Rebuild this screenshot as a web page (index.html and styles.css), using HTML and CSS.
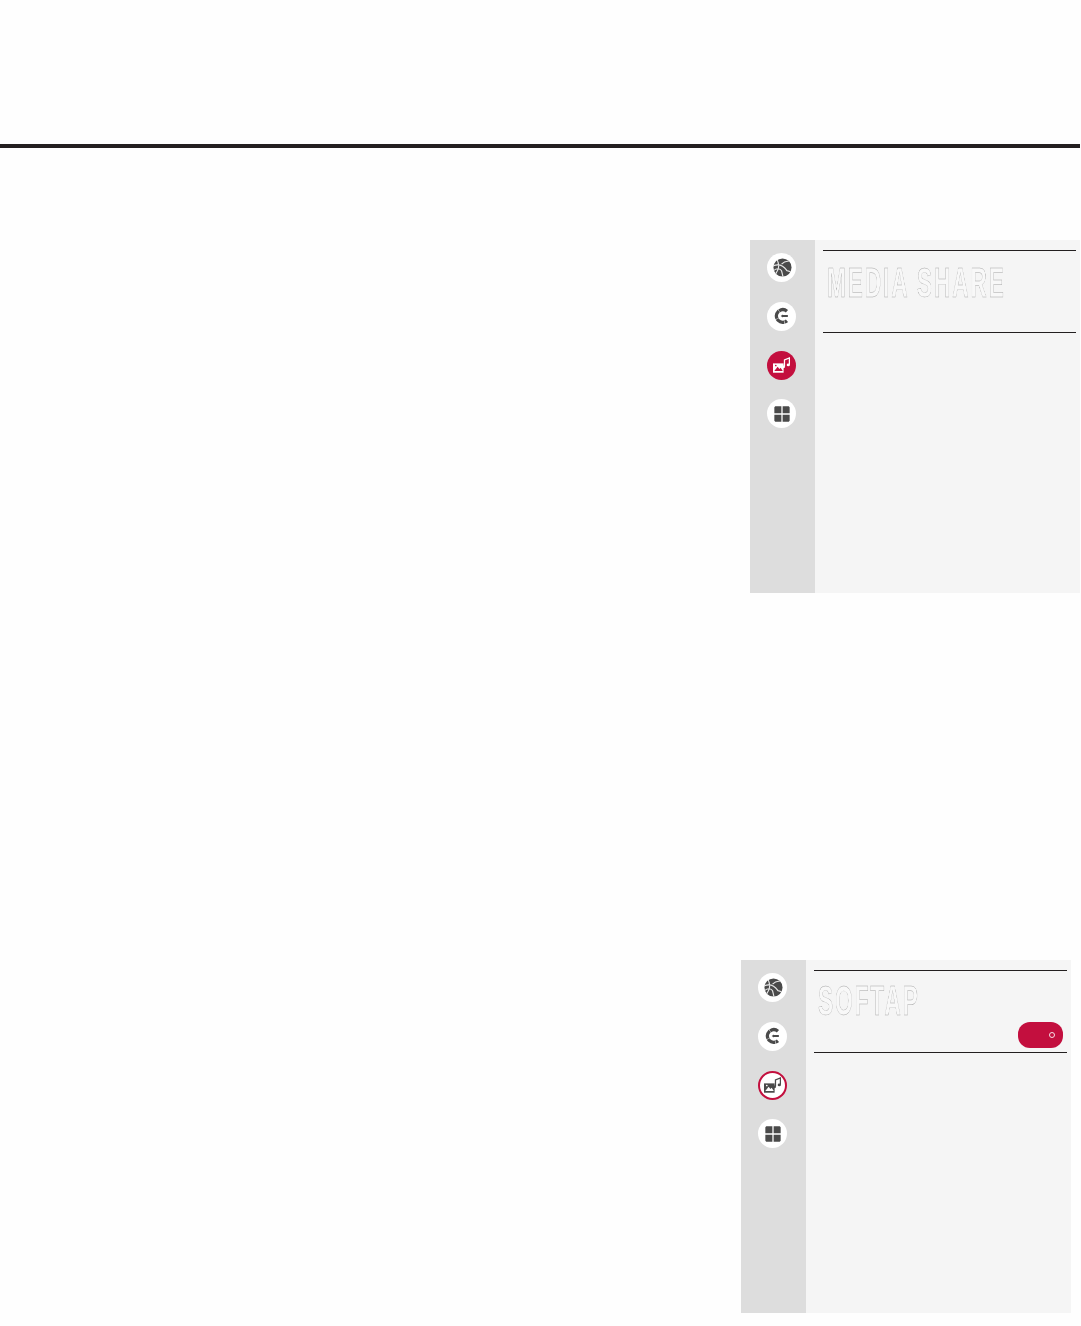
FILE: index.html
```html
<!DOCTYPE html>
<html lang="en">
<head>
    <meta charset="UTF-8">
    <meta name="viewport" content="width=device-width, initial-scale=1.0">
    <title>Media Share / SoftAP</title>
    <link rel="stylesheet" href="styles.css">
</head>
<body>
    <div class="page-rule"></div>

    <div class="menu menu-share">
        <div class="menu-side">
            <div class="side-icon">
                <svg class="icon-globe" viewBox="0 0 20 20"><circle cx="10" cy="10" r="9.500" fill="#4a4a4a"/><path d="M.5 8C6 6 11 8 14.500 13M4.500 2C6.500 6 6 12 3 16.500M1 13C4 10.500 7.500 11 9 13.500L10.500 19.500M14 13L18.500 14.500M9 6.500C11 4.500 14 3 16.500 3.500" fill="none" stroke="#e8e8e8" stroke-width="1.200"/></svg>
            </div>
            <div class="side-icon">
                <svg class="icon-input" viewBox="0 0 20 20"><path d="M15.500 4.800A7 7 0 1 0 15.500 15.200" fill="none" stroke="#4a4a4a" stroke-width="3.600" stroke-dasharray="9 .5"/><path d="M8.500 10L11 8.300V9H16.500V11H11V11.700Z" fill="#4a4a4a"/></svg>
            </div>
            <div class="side-icon side-icon-media side-icon-active">
                <svg viewBox="0 0 20 20"><path d="M0 7.500H12.500V18.500H0Z" fill="#fff"/><path d="M1.500 16.500L5.500 11.500L7.500 14L9 12.500L11.500 16.500Z" fill="#c30f3e"/><circle cx="3.300" cy="10" r="1" fill="#c30f3e"/><path d="M13.500 11V3.500L19.300 1.200V9" fill="none" stroke="#fff" stroke-width="1.500"/><ellipse cx="12.300" cy="11.500" rx="1.900" ry="1.600" fill="#fff"/><ellipse cx="18" cy="9.300" rx="1.900" ry="1.600" fill="#fff"/></svg>
            </div>
            <div class="side-icon">
                <svg class="icon-grid" viewBox="0 0 20 20"><path d="M2.500 1.500H9.300V9.300H1.500V2.500ZM10.700 1.500H17.500L18.500 2.500V9.300H10.700ZM1.500 10.700H9.300V18.500H2.500L1.500 17.500ZM10.700 10.700H18.500V17.500L17.500 18.500H10.700Z" fill="#4a4a4a"/></svg>
            </div>
        </div>
        <div class="menu-main">
            <div class="menu-head">
                <div class="menu-title title-share">MEDIA SHARE</div>
            </div>
        </div>
    </div>

    <div class="menu menu-softap">
        <div class="menu-side">
            <div class="side-icon">
                <svg class="icon-globe" viewBox="0 0 20 20"><circle cx="10" cy="10" r="9.500" fill="#4a4a4a"/><path d="M.5 8C6 6 11 8 14.500 13M4.500 2C6.500 6 6 12 3 16.500M1 13C4 10.500 7.500 11 9 13.500L10.500 19.500M14 13L18.500 14.500M9 6.500C11 4.500 14 3 16.500 3.500" fill="none" stroke="#e8e8e8" stroke-width="1.200"/></svg>
            </div>
            <div class="side-icon">
                <svg class="icon-input" viewBox="0 0 20 20"><path d="M15.500 4.800A7 7 0 1 0 15.500 15.200" fill="none" stroke="#4a4a4a" stroke-width="3.600" stroke-dasharray="9 .5"/><path d="M8.500 10L11 8.300V9H16.500V11H11V11.700Z" fill="#4a4a4a"/></svg>
            </div>
            <div class="side-icon side-icon-media side-icon-ring">
                <svg viewBox="0 0 20 20"><path d="M0 7.500H12.500V18.500H0Z" fill="#4a4a4a"/><path d="M1.500 16.500L5.500 11.500L7.500 14L9 12.500L11.500 16.500Z" fill="#fff"/><circle cx="3.300" cy="10" r="1" fill="#fff"/><path d="M13.500 11V3.500L19.300 1.200V9" fill="none" stroke="#4a4a4a" stroke-width="1.500"/><ellipse cx="12.300" cy="11.500" rx="1.900" ry="1.600" fill="#4a4a4a"/><ellipse cx="18" cy="9.300" rx="1.900" ry="1.600" fill="#4a4a4a"/></svg>
            </div>
            <div class="side-icon">
                <svg class="icon-grid" viewBox="0 0 20 20"><path d="M2.500 1.500H9.300V9.300H1.500V2.500ZM10.700 1.500H17.500L18.500 2.500V9.300H10.700ZM1.500 10.700H9.300V18.500H2.500L1.500 17.500ZM10.700 10.700H18.500V17.500L17.500 18.500H10.700Z" fill="#4a4a4a"/></svg>
            </div>
        </div>
        <div class="menu-main">
            <div class="menu-head">
                <div class="menu-title title-softap">SOFTAP</div>
                <div class="toggle"><span class="toggle-dot"></span></div>
            </div>
        </div>
    </div>
</body>
</html>
```

FILE: styles.css
```css
* {
    margin: 0;
    padding: 0;
    box-sizing: border-box;
}

body {
    background: #fefefe;
    height: 1326px;
    overflow: hidden;
    padding-top: 144px;
    font-family: 'Liberation Sans', sans-serif;
}

.page-rule {
    width: 1080px;
    height: 4px;
    background: #231f20;
}

.menu {
    display: flex;
    width: 330px;
    height: 353px;
}

.menu-share {
    margin: 92px 0 0 750px;
}

.menu-softap {
    margin: 367px 0 0 741px;
}

.menu-side {
    width: 65px;
    flex-shrink: 0;
    background: #dddddd;
    display: flex;
    flex-direction: column;
    align-items: center;
    gap: 20px;
    padding: 12.500px 2px 0 0;
}

.side-icon {
    width: 29px;
    height: 29px;
    flex-shrink: 0;
    border-radius: 50%;
    background: #fff;
    display: flex;
    align-items: center;
    justify-content: center;
}

.side-icon svg {
    width: 17px;
    height: 17px;
}

.side-icon .icon-globe {
    width: 19px;
    height: 19px;
    margin-left: 2px;
}

.side-icon .icon-input {
    width: 18px;
    height: 18px;
    margin-left: 1px;
}

.side-icon .icon-grid {
    width: 18px;
    height: 18px;
}

.side-icon-media {
    margin: .5px 0 -1px;
}

.side-icon-active {
    background: #c30f3e;
}

.side-icon-ring {
    border: 2px solid #c30f3e;
}

.menu-main {
    flex: 1;
    min-width: 0;
    background: #f5f5f5;
    padding: 10px 4px 0 8px;
}

.menu-head {
    position: relative;
    height: 83px;
    border-top: 1px solid #231f20;
    border-bottom: 1px solid #231f20;
    padding: 10px 0 0 4px;
}

/* outlined condensed heading, will-change keeps the outline free of colour fringes */
.menu-title {
    font-size: 42px;
    font-weight: bold;
    line-height: 44px;
    color: #f8f8f8;
    -webkit-text-stroke: 0.4px #a8a8a8;
    letter-spacing: 3.500px;
    transform-origin: left top;
    white-space: nowrap;
    transform: scaleX(0.54);
    will-change: transform;
}

.title-softap {
    margin-top: -2px;
}

.toggle {
    position: absolute;
    right: 4px;
    top: 51px;
    width: 45px;
    height: 26px;
    border-radius: 12px;
    background: #c30f3e;
}

.toggle-dot {
    position: absolute;
    right: 8px;
    top: 10px;
    width: 6px;
    height: 6px;
    border: 1px solid #f6dfe5;
    border-radius: 50%;
}
```
